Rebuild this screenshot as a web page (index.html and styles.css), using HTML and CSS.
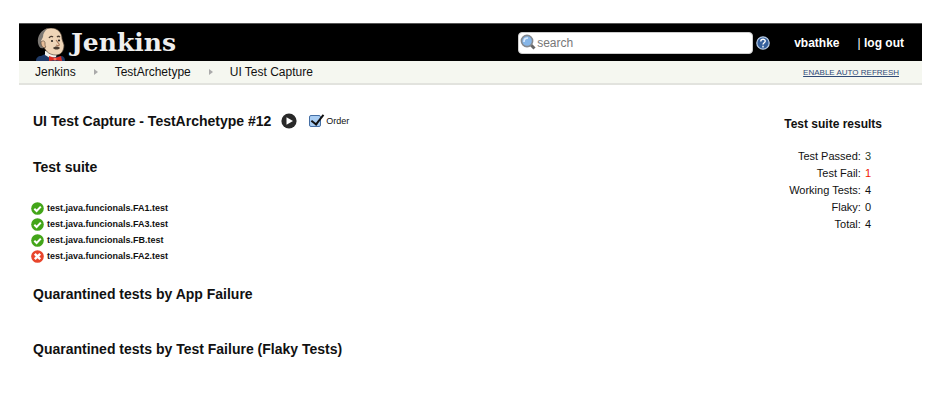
FILE: index.html
```html
<!DOCTYPE html>
<html lang="en">
<head>
    <meta charset="UTF-8">
    <meta name="viewport" content="width=device-width, initial-scale=1.0">
    <title>UI Test Capture [Jenkins]</title>
    <link rel="stylesheet" href="styles.css">
</head>
<body>
    <svg class="symbols" width="0" height="0" aria-hidden="true">
        <symbol id="icon-passed" viewBox="0 0 13 13">
            <circle cx="6.5" cy="6.5" r="6.3" fill="#43a519"/>
            <path d="M3.3 6.7l2.3 2.3 4.2-4.4" fill="none" stroke="#fff" stroke-width="2"/>
        </symbol>
        <symbol id="icon-failed" viewBox="0 0 13 13">
            <circle cx="6.5" cy="6.5" r="6.3" fill="#e8452c"/>
            <path d="M3.8 3.8l5.4 5.4M9.2 3.8L3.8 9.2" fill="none" stroke="#fff" stroke-width="2.4"/>
        </symbol>
    </svg>

    <header class="top-bar">
        <a class="logo" href="#">
            <svg class="butler" viewBox="0 0 29 33" aria-hidden="true">
                <path d="M0 33c0-3 2-5 5-5l4-2 10 3 7-1c2 1 3 2 3 5z" fill="#1f3a66"/>
                <path d="M9 23v4l5 3 6-1 1-4z" fill="#f4f1ea"/>
                <path d="M4 12C4 4 9 0 15 0c7 0 11 5 11 11l2 6c0 6-3 10-8 10-6 0-10-3-12-8-3 0-4-3-4-7z" fill="#efd5b7" stroke="#5c4b3c" stroke-width=".7"/>
                <path d="M2 15C1 8 5 2 12 0 9 3 7 5 7 9l-2 4 3 7c-4 1-5-1-6-5z" fill="#7c7873"/>
                <path d="M5 14c2-2 4-1 4 1s0 3 1 4c-3 2-5-1-5-5z" fill="#e7bd98" stroke="#4a3c30" stroke-width=".6"/>
                <path d="M13 10c1-2 3-2 4-1M21 9c1-1 2-1 3 0" fill="none" stroke="#4a3c30" stroke-width="1.3"/>
                <path d="M17 20c2-2 5-2 7 0-2 2-5 2-7 0z" fill="#4a3c30"/>
                <path d="M20 12l3 4c1 2-1 2-3 1" fill="none" stroke="#a9795a" stroke-width="1.1"/>
                <circle cx="16" cy="13" r="1.1" fill="#2c2722"/>
                <circle cx="23" cy="12.5" r="1.1" fill="#2c2722"/>
                <path d="M13 28l6 2 6-2 1 5-7-1-6 1z" fill="#dc2b20"/>
                <circle cx="19" cy="31" r="1.5" fill="#ff705a"/>
            </svg>
            <span class="logo-text">Jenkins</span>
        </a>
        <form class="search" role="search">
            <svg class="search-icon" viewBox="0 0 16 16" aria-hidden="true">
                <path d="M11 11l3.5 3.5" stroke="#666" stroke-width="3"/>
                <circle cx="7" cy="7" r="5.6" fill="#86b6e8" stroke="#85898f" stroke-width="1.6"/>
                <path d="M4 8c0-3 1-4 4-4" fill="none" stroke="#dcecff" stroke-width="1.6"/>
            </svg>
            <input class="search-box" type="text" placeholder="search" aria-label="search">
        </form>
        <a class="help" href="#" aria-label="Help">
            <svg viewBox="0 0 14 14" aria-hidden="true">
                <circle cx="7" cy="7" r="6.2" fill="#35609c" stroke="#b9cce4" stroke-width="1.2"/>
                <path d="M4.8 5.4C4.8 2.6 9.3 2.7 9.2 5.2 9.1 6.8 7 6.8 7 8.6M7 9.8v1.6" fill="none" stroke="#fff" stroke-width="1.4"/>
            </svg>
        </a>
        <nav class="login">
            <a href="#">vbathke</a>
            <span><span class="divider">|</span> <a href="#">log out</a></span>
        </nav>
    </header>

    <nav class="breadcrumbs">
        <a href="#">Jenkins</a>
        <span class="arrow"></span>
        <a href="#">TestArchetype</a>
        <span class="arrow"></span>
        <a href="#">UI Test Capture</a>
        <a class="auto-refresh" href="#">ENABLE AUTO REFRESH</a>
    </nav>

    <main class="content">
        <section class="suite">
            <div class="title-row">
                <h1>UI Test Capture - TestArchetype #12</h1>
                <button class="play" type="button" aria-label="Run">
                    <svg viewBox="0 0 16 16" aria-hidden="true">
                        <circle cx="8" cy="8" r="7.6" fill="#292929"/>
                        <path d="M5.5 4.2v7.6l6.5-3.8z" fill="#fff"/>
                    </svg>
                </button>
                <label class="order"><input type="checkbox" checked> Order</label>
            </div>

            <h2>Test suite</h2>
            <ul class="tests">
                <li><svg class="status"><use href="#icon-passed"/></svg>test.java.funcionals.FA1.test</li>
                <li><svg class="status"><use href="#icon-passed"/></svg>test.java.funcionals.FA3.test</li>
                <li><svg class="status"><use href="#icon-passed"/></svg>test.java.funcionals.FB.test</li>
                <li><svg class="status"><use href="#icon-failed"/></svg>test.java.funcionals.FA2.test</li>
            </ul>

            <h2>Quarantined tests by App Failure</h2>
            <h2>Quarantined tests by Test Failure (Flaky Tests)</h2>
        </section>

        <aside class="results">
            <h3>Test suite results</h3>
            <table>
                <tr><th scope="row">Test Passed:</th><td class="passed">3</td></tr>
                <tr><th scope="row">Test Fail:</th><td class="failed">1</td></tr>
                <tr><th scope="row">Working Tests:</th><td>4</td></tr>
                <tr><th scope="row">Flaky:</th><td>0</td></tr>
                <tr><th scope="row">Total:</th><td>4</td></tr>
            </table>
        </aside>
    </main>
</body>
</html>
```
FILE: styles.css
```css
* {
    box-sizing: border-box;
}
body {
    font-family: "Liberation Sans", Arial, sans-serif;
    font-size: 12px;
    margin: 23px 26px 0 19px;
    background-color: #fff;
    color: #111;
}
a {
    color: inherit;
    text-decoration: none;
}
svg {
    display: block;
}
.symbols {
    position: absolute;
}

/* Header */
.top-bar {
    display: flex;
    align-items: center;
    height: 38px;
    padding-right: 18px;
    border-top: 1px solid #555;
    background-color: #000;
    color: #fff;
}
.logo {
    display: flex;
    align-items: center;
    gap: 6px;
    height: 100%;
    padding-left: 17px;
}
.butler {
    align-self: flex-end;
    width: 29px;
    height: 33px;
}
.logo-text {
    font-family: "DejaVu Serif", Georgia, serif;
    font-size: 25px;
    font-weight: bold;
    line-height: 34px;
    color: #eee;
}
.search {
    position: relative;
    width: 235px;
    margin-left: auto;
}
.search-icon {
    position: absolute;
    top: 2px;
    left: 2px;
    width: 16px;
    height: 16px;
}
.search-box {
    display: block;
    width: 100%;
    height: 22px;
    padding: 0 4px 0 18px;
    border: 1px solid #ccc;
    border-radius: 4px;
    background-color: #fff;
    font: inherit;
}
.search-box::placeholder {
    color: #777;
}
.help {
    width: 14px;
    margin-left: 3px;
}
.login {
    display: flex;
    gap: 18px;
    margin-left: 24px;
    font-size: 12px;
    font-weight: bold;
}
.divider {
    font-weight: normal;
}

/* Breadcrumbs */
.breadcrumbs {
    display: flex;
    align-items: center;
    gap: 16px;
    height: 24px;
    padding: 0 23px 0 16px;
    border-bottom: 2px solid #e2e3de;
    background-color: #f5f7f0;
}
.arrow {
    border: 3px solid transparent;
    border-left: 4px solid #aaa;
    border-right: 0;
    margin: 0 1px 0 2px;
}
.auto-refresh {
    margin-left: auto;
    font-size: 8px;
    color: #2f4a77;
    text-decoration: underline;
}

/* Content */
.content {
    display: flex;
    justify-content: space-between;
    padding: 26px 12px 0;
}
.title-row {
    display: flex;
    align-items: center;
    height: 20px;
    padding-left: 2px;
    margin-bottom: 26px;
}
h1,
h2 {
    margin: 0;
    font-size: 14px;
    line-height: 20px;
}
h2 {
    margin-bottom: 35px;
    padding-left: 2px;
}
.play {
    width: 16px;
    margin-left: 10px;
    padding: 0;
    border: 0;
    background: none;
    cursor: pointer;
}
.order {
    display: flex;
    align-items: center;
    gap: 5px;
    margin-left: 12px;
    font-size: 9px;
}
.order input {
    appearance: none;
    width: 12px;
    height: 12px;
    margin: 0;
    border: 1px solid #456fa5;
    border-radius: 2px;
    background-color: #a9cdf3;
}
.order input:checked::before {
    content: "";
    display: block;
    width: 5px;
    height: 11px;
    margin: -4px 0 0 4px;
    border: solid #111;
    border-width: 0 2px 2px 0;
    transform: rotate(38deg);
}
.tests {
    margin: -12px 0 20px;
    padding: 0;
    list-style: none;
    font-size: 9px;
    font-weight: bold;
}
.tests li {
    display: flex;
    align-items: center;
    gap: 3px;
    height: 16px;
}
.status {
    width: 13px;
    height: 13px;
}

/* Results */
.results {
    padding: 4px 28px 0 0;
}
.results h3 {
    margin: 0 0 15px;
    font-size: 12px;
    line-height: 18px;
}
.results table {
    margin-left: auto;
    margin-right: 11px;
    border-spacing: 0;
}
.results th,
.results td {
    padding: 0;
    line-height: 17px;
    font-size: 11px;
}
.results th {
    padding-right: 4px;
    font-weight: normal;
    text-align: right;
}
.results .passed {
    color: #2c3d1e;
}
.results .failed {
    color: #f01800;
}
```
